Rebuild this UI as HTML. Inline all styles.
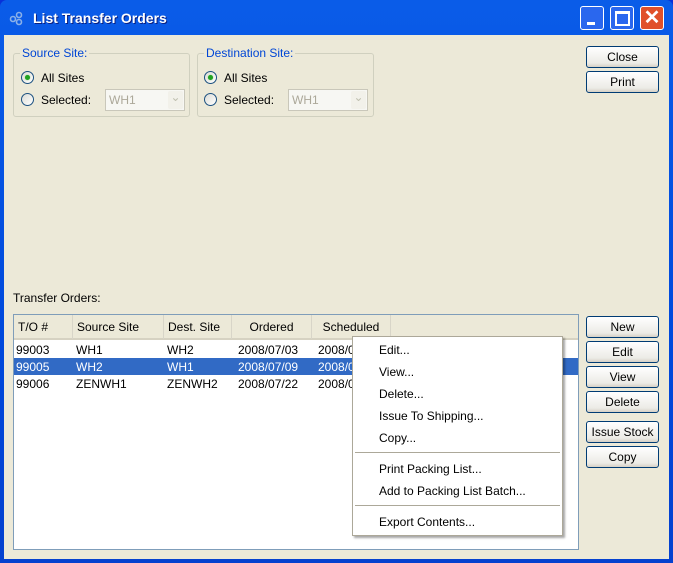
<!DOCTYPE html><html><head><style>
*{margin:0;padding:0;box-sizing:border-box}
body{width:673px;height:563px;overflow:hidden;font-family:"Liberation Sans",sans-serif;font-size:12px;background:#0831d9}
.a{position:absolute}
#win{position:absolute;left:0;top:0;width:673px;height:563px;background:linear-gradient(#0a5ce8,#0049dc 60%,#0541cf);border-radius:7px 7px 0 0}
#body{position:absolute;left:4px;top:35px;width:665px;height:524px;background:#ECE9D8}
.btn{position:absolute;left:586px;width:73px;height:22px;border:1px solid #003c74;border-radius:3px;background:linear-gradient(#fff,#ecebe6 80%,#d6d0c5);text-align:center;line-height:20px;color:#000}
.gb{position:absolute;border:1px solid #d0d0bf;border-radius:3px}
.gl{position:absolute;top:-8px;left:6px;background:#ECE9D8;color:#0046d5;padding:0 2px}
.rad{position:absolute;width:13px;height:13px;border-radius:50%;border:1px solid #1c5180;background:linear-gradient(135deg,#dcdcd6,#fff)}
.rad.on::after{content:"";position:absolute;left:3px;top:3px;width:5px;height:5px;border-radius:50%;background:#21a121;box-shadow:0 0 1px #4cd44c}
.cb{position:absolute;width:80px;height:22px;border:1px solid #c9c7ba;background:#f7f7f3;color:#aca899;padding:3px 0 0 3px}
.cb::after{content:"⌄";position:absolute;right:1px;top:1px;width:15px;height:18px;background:#f2f1ea;color:#c0c0b0;text-align:center;line-height:12px;border-radius:2px}
.hd{position:absolute;top:0;height:24px;line-height:24px;border-right:1px solid #d8d5c8;padding-left:4px}
.mi{position:absolute;left:26px}
</style></head><body>
<div id="win">
<svg class="a" style="left:8px;top:10px" width="16" height="16"><g fill="none" stroke="#8ab0e8" stroke-width="1.6"><circle cx="5" cy="9" r="2.5"/><circle cx="11" cy="5" r="2.5"/><circle cx="11" cy="12" r="2.5"/></g></svg>
<div class="a" style="left:33px;top:10px;color:#fff;font-weight:bold;font-size:14px;text-shadow:1px 1px #0a1f80">List Transfer Orders</div>
<div class="a" style="left:580px;top:6px;width:24px;height:24px;border:1px solid #fff;border-radius:3px;background:#2a67ee"><div class="a" style="left:6px;top:15px;width:8px;height:3px;background:#fff"></div></div>
<div class="a" style="left:610px;top:6px;width:24px;height:24px;border:1px solid #fff;border-radius:3px;background:#2a67ee"><div class="a" style="left:4px;top:4px;width:15px;height:15px;border:2px solid #fff;border-top-width:3px"></div></div>
<div class="a" style="left:640px;top:6px;width:24px;height:24px;border:1px solid #fff;border-radius:3px;background:#e0502a;color:#fff;font-size:20px;font-weight:bold;text-align:center;line-height:22px">✕</div>
<div id="body"></div>
</div>
<div class="gb" style="left:13px;top:53px;width:177px;height:64px"><span class="gl">Source Site:</span></div>
<div class="rad on" style="left:21px;top:71px"></div><div class="a" style="left:41px;top:71px">All Sites</div>
<div class="rad" style="left:21px;top:93px"></div><div class="a" style="left:41px;top:93px">Selected:</div>
<div class="cb" style="left:105px;top:89px">WH1</div>
<div class="gb" style="left:197px;top:53px;width:177px;height:64px"><span class="gl">Destination Site:</span></div>
<div class="rad on" style="left:204px;top:71px"></div><div class="a" style="left:224px;top:71px">All Sites</div>
<div class="rad" style="left:204px;top:93px"></div><div class="a" style="left:224px;top:93px">Selected:</div>
<div class="cb" style="left:288px;top:89px">WH1</div>
<div class="btn" style="top:46px">Close</div>
<div class="btn" style="top:71px">Print</div>
<div class="a" style="left:13px;top:291px">Transfer Orders:</div>
<div class="a" style="left:13px;top:314px;width:566px;height:236px;border:1px solid #7f9db9;background:#fff">
<div class="a" style="left:0;top:0;width:564px;height:25px;background:#ECE9D8;border-bottom:2px solid #d6d2c2">
<div class="hd" style="left:0;width:59px">T/O #</div>
<div class="hd" style="left:59px;width:91px">Source Site</div>
<div class="hd" style="left:150px;width:68px">Dest. Site</div>
<div class="hd" style="left:218px;width:80px;text-align:center;padding:0">Ordered</div>
<div class="hd" style="left:298px;width:79px;text-align:center;padding:0">Scheduled</div>
</div>
<div class="a" style="left:0;top:43px;width:564px;height:17px;background:#316ac5"></div>
<div class="a" style="left:2px;top:27px;line-height:17px">99003<br><span style="color:#fff">99005</span><br>99006</div>
<div class="a" style="left:62px;top:27px;line-height:17px">WH1<br><span style="color:#fff">WH2</span><br>ZENWH1</div>
<div class="a" style="left:153px;top:27px;line-height:17px">WH2<br><span style="color:#fff">WH1</span><br>ZENWH2</div>
<div class="a" style="left:224px;top:27px;line-height:17px">2008/07/03<br><span style="color:#fff">2008/07/09</span><br>2008/07/22</div>
<div class="a" style="left:304px;top:27px;line-height:17px">2008/07/03<br><span style="color:#fff">2008/07/09</span><br>2008/07/22</div>
</div>
<div class="a" style="left:352px;top:336px;width:211px;height:200px;background:#fff;border:1px solid #aca899;box-shadow:2px 2px 2px rgba(0,0,0,.35)">
<div class="mi" style="top:6px">Edit...</div>
<div class="mi" style="top:28px">View...</div>
<div class="mi" style="top:50px">Delete...</div>
<div class="mi" style="top:72px">Issue To Shipping...</div>
<div class="mi" style="top:94px">Copy...</div>
<div class="a" style="left:2px;top:115px;width:205px;height:1px;background:#aca899"></div>
<div class="mi" style="top:125px">Print Packing List...</div>
<div class="mi" style="top:147px">Add to Packing List Batch...</div>
<div class="a" style="left:2px;top:168px;width:205px;height:1px;background:#aca899"></div>
<div class="mi" style="top:178px">Export Contents...</div>
</div>
<div class="btn" style="top:316px">New</div>
<div class="btn" style="top:341px">Edit</div>
<div class="btn" style="top:366px">View</div>
<div class="btn" style="top:391px">Delete</div>
<div class="btn" style="top:421px">Issue Stock</div>
<div class="btn" style="top:446px">Copy</div>
</body></html>
